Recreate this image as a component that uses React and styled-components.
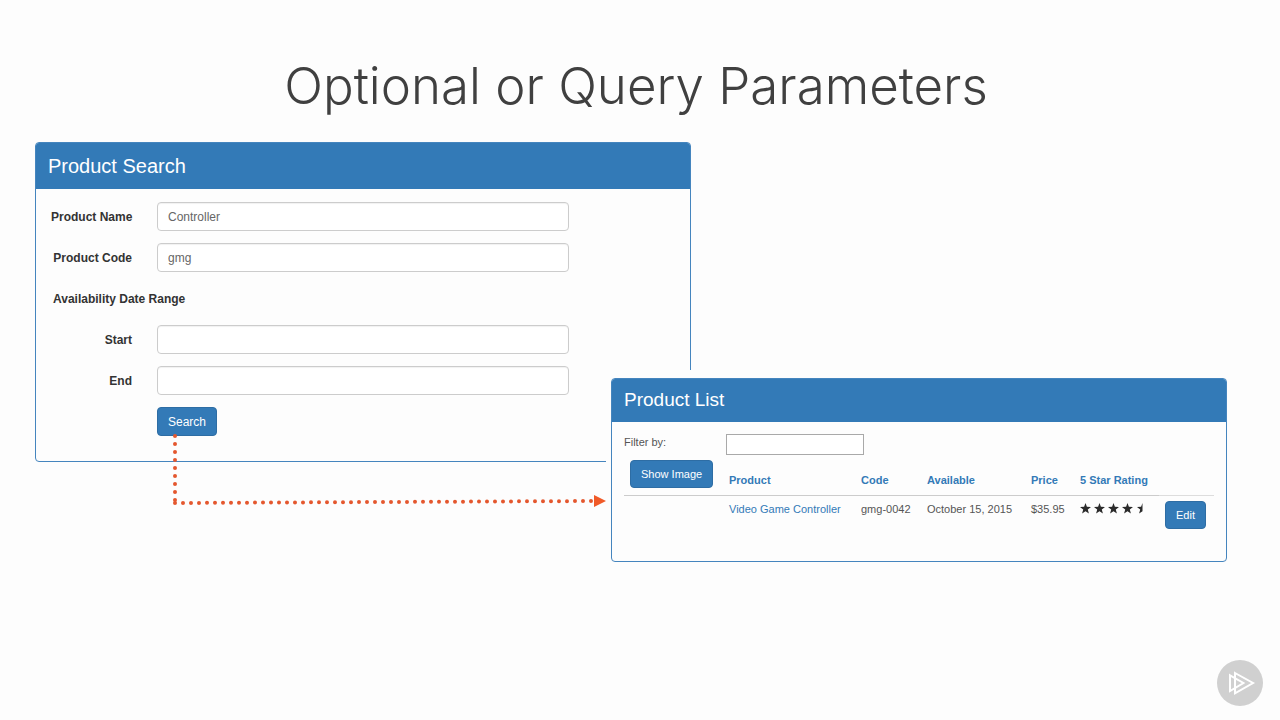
import React from "react";
import styled, { createGlobalStyle } from "styled-components";

const blue = "#337ab7";

const GlobalStyle = createGlobalStyle`
  *, *::before, *::after { box-sizing: border-box; }
  body {
    margin: 0;
    background: #fdfdfd;
    color: #555;
    font-family: "Liberation Sans", Arial, sans-serif;
    font-size: 12px;
    line-height: 16px;
  }
`;

const Slide = styled.main`
  position: relative;
  min-height: 100vh;
  padding: 56px 53px 0 35px;
`;

const SlideTitle = styled.h1`
  margin: 0 0 26px;
  padding-left: 10px;
  text-align: center;
  color: #404040;
  font-family: Inter, "Open Sans", sans-serif;
  font-weight: 300;
  font-size: 51px;
  line-height: 60px;
`;

const Stage = styled.div`
  display: grid;
  grid-template-columns: 571fr 85fr 536fr;
  grid-template-rows: 228px auto auto;
  align-items: start;
`;

const Panel = styled.section`
  border: 1px solid #4585be;
  border-radius: 4px;
  background: #fdfdfd;
  overflow: hidden;
`;

const SearchPanel = styled(Panel)`
  grid-column: 1 / 3;
  grid-row: 1 / 3;
`;

const ListFrame = styled.div`
  grid-column: 2 / 4;
  grid-row: 2 / 4;
  padding: 8px 0 0 5px;
  background: #fdfdfd;
  font-size: 11px;
`;

const PanelTitle = styled.h2`
  margin: 0;
  padding: ${(p) => (p.$compact ? "9px 12px 10px" : "11px 12px")};
  background: ${blue};
  color: #fff;
  font-weight: 400;
  font-size: ${(p) => (p.$compact ? "19px" : "20px")};
  line-height: 24px;
`;

const Form = styled.form`
  display: grid;
  gap: 12px;
  padding: 13px 121px 25px 15px;
`;

const Field = styled.div`
  display: grid;
  grid-template-columns: 81px 1fr;
  column-gap: 25px;
  align-items: center;
  min-height: 29px;
`;

const Label = styled.label`
  color: #333;
  font-weight: 700;
  text-align: right;
  white-space: nowrap;
`;

const RangeHeading = styled.div`
  display: flex;
  align-items: center;
  height: 29px;
  padding-left: 2px;
  color: #333;
  font-weight: 700;
`;

const TextInput = styled.input`
  width: 100%;
  height: 29px;
  padding: 0 10px;
  border: 1px solid #ccc;
  border-radius: 4px;
  background: #fff;
  color: #666;
  font: inherit;
  box-shadow: inset 0 1px 1px rgba(0, 0, 0, 0.06);
`;

const Button = styled.button`
  grid-column: ${(p) => (p.$indent ? 2 : "auto")};
  justify-self: start;
  height: ${(p) => (p.$indent ? "29px" : "28px")};
  padding: 0 10px;
  border: 1px solid #2e6da4;
  border-radius: 4px;
  background: ${blue};
  color: #fff;
  font: inherit;
  font-weight: 400;
  white-space: nowrap;
`;

const ListBody = styled.div`
  padding: 12px 12px 32px;
`;

const FilterRow = styled.div`
  display: grid;
  grid-template-columns: 102px 138px;
  align-items: start;
`;

const FilterInput = styled.input`
  height: 21px;
  border: 1px solid #a9a9a9;
  background: #fff;
  font: inherit;
`;

const Table = styled.table`
  width: 100%;
  margin-top: 5px;
  border-collapse: collapse;
  table-layout: fixed;

  th, td {
    padding: 0 6px;
    text-align: left;
    white-space: nowrap;
  }
  th {
    height: 35px;
    border-bottom: 1px solid #ccc;
    color: ${blue};
    font-weight: 700;
    vertical-align: middle;
    padding-top: 5px;
  }
  th:first-child {
    padding-top: 0;
    padding-bottom: 6px;
  }
  th:last-child { border-bottom-color: #ddd; }
  td {
    height: 33px;
    padding-top: 5px;
    vertical-align: top;
  }
`;

const columnShares = [99, 132, 66, 104, 49, 85, 55];
const shareTotal = columnShares.reduce((sum, share) => sum + share, 0);

const Col = styled.col`
  width: ${(p) => (p.$share / shareTotal) * 100}%;
`;

const ProductLink = styled.a`
  color: ${blue};
  text-decoration: none;
`;

const Stars = styled.svg`
  display: block;
  margin-top: 2px;
`;

const Connector = styled.div`
  z-index: 1;
  grid-column: 1;
  grid-row: 2;
  display: flex;
  height: 74px;
  margin: 64px 0 0 136px;
  pointer-events: none;
`;

const Dots = styled.svg`
  flex: 1;
  min-width: 0;
  height: 74px;
`;

const Logo = styled.svg`
  position: absolute;
  right: 17px;
  bottom: 14px;
`;

const starPoints =
  "5.5,0 6.9,3.8 11,4 7.8,6.5 8.9,10.5 5.5,8.2 2.1,10.5 3.2,6.5 0,4 4.1,3.8";
const halfStarPoints = "5.5,0 5.5,8.2 2.1,10.5 3.2,6.5 0,4 4.1,3.8";

function Rating() {
  return (
    <Stars width="64" height="11" role="img" aria-label="4.5 stars" fill="#2b2b2b">
      {[0, 14, 28, 42].map((x) => (
        <polygon key={x} points={starPoints} transform={`translate(${x} 0)`} />
      ))}
      <polygon points={halfStarPoints} transform="translate(57 0)" />
    </Stars>
  );
}

function FormField({ id, label, value = "" }) {
  return (
    <Field>
      <Label htmlFor={id}>{label}</Label>
      <TextInput id={id} type="text" defaultValue={value} />
    </Field>
  );
}

export default function App() {
  return (
    <Slide>
      <GlobalStyle />
      <SlideTitle>Optional or Query Parameters</SlideTitle>
      <Stage>
        <SearchPanel>
          <PanelTitle>Product Search</PanelTitle>
          <Form onSubmit={(e) => e.preventDefault()}>
            <FormField id="name" label="Product Name" value="Controller" />
            <FormField id="code" label="Product Code" value="gmg" />
            <RangeHeading>Availability Date Range</RangeHeading>
            <FormField id="start" label="Start" />
            <FormField id="end" label="End" />
            <Field>
              <Button type="submit" $indent>Search</Button>
            </Field>
          </Form>
        </SearchPanel>

        <ListFrame>
          <Panel>
            <PanelTitle $compact>Product List</PanelTitle>
            <ListBody>
              <FilterRow>
                <label htmlFor="filter">Filter by:</label>
                <FilterInput id="filter" type="text" />
              </FilterRow>
              <Table>
                <colgroup>
                  {columnShares.map((share, i) => (
                    <Col key={i} $share={share} />
                  ))}
                </colgroup>
                <thead>
                  <tr>
                    <th><Button type="button">Show Image</Button></th>
                    <th>Product</th>
                    <th>Code</th>
                    <th>Available</th>
                    <th>Price</th>
                    <th>5 Star Rating</th>
                    <th />
                  </tr>
                </thead>
                <tbody>
                  <tr>
                    <td />
                    <td><ProductLink href="#product">Video Game Controller</ProductLink></td>
                    <td>gmg-0042</td>
                    <td>October 15, 2015</td>
                    <td>$35.95</td>
                    <td><Rating /></td>
                    <td><Button type="button">Edit</Button></td>
                  </tr>
                </tbody>
              </Table>
            </ListBody>
          </Panel>
        </ListFrame>

        <Connector aria-hidden="true">
          <Dots>
            <g stroke="#e4572e" strokeWidth="4" strokeLinecap="round" strokeDasharray="0 8">
              <line x1="4" y1="2" x2="4" y2="67" />
              <line x1="4" y1="69" x2="100%" y2="67" />
            </g>
          </Dots>
          <svg width="12" height="74">
            <polygon points="0,61 12,67 0,73" fill="#f05a28" />
          </svg>
        </Connector>
      </Stage>
      <Logo width="46" height="46" viewBox="0 0 46 46" role="img" aria-label="Logo">
        <circle cx="23" cy="23" r="23" fill="#d0d0d0" />
        <g fill="none" stroke="#fff" strokeWidth="2">
          <path d="M18 13 L36 23 L18 33.3 Z" />
          <path d="M13 15.3 L26.4 23 L13 31 Z" />
        </g>
      </Logo>
    </Slide>
  );
}
